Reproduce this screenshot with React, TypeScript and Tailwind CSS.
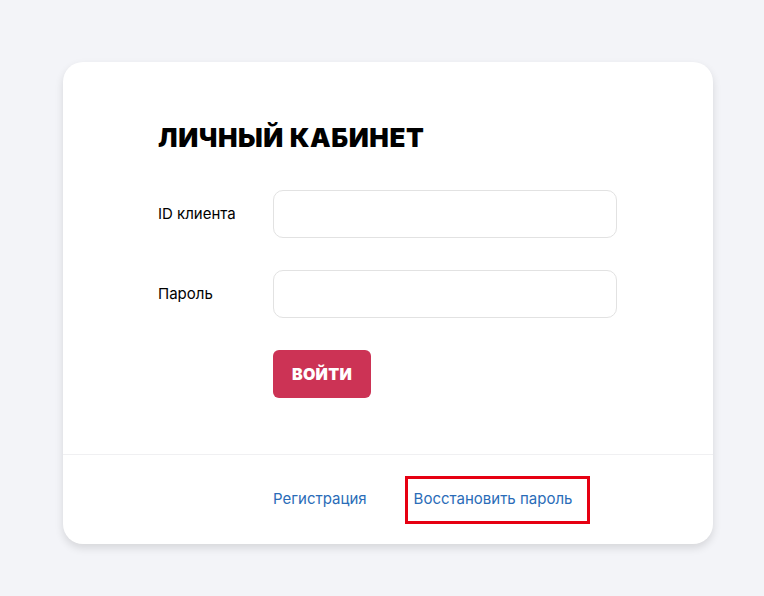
import React from "react"

export default function App() {
  return (
    <div className="min-h-[596px] w-full bg-[#f3f4f8] pt-[62px] font-['Inter','Liberation_Sans',sans-serif]">
      <div className="ml-[63px] w-[650px] rounded-[20px] bg-white shadow-[0_4px_8px_rgba(0,0,0,0.12)]">
        <div className="pl-[95px] pt-[60px] pb-[56px]">
          <h1 className="text-[26px] leading-[32px] font-black tracking-[0.6px] text-black">
            ЛИЧНЫЙ КАБИНЕТ
          </h1>

          <div className="mt-[36px] flex flex-col gap-[32px]">
            <div className="flex items-center">
              <label className="w-[115px] text-[15px] text-black">ID клиента</label>
              <input
                type="text"
                className="h-[48px] w-[344px] rounded-[10px] border border-[#e2e2e2] bg-white px-3 outline-none"
              />
            </div>
            <div className="flex items-center">
              <label className="w-[115px] text-[15px] text-black">Пароль</label>
              <input
                type="password"
                className="h-[48px] w-[344px] rounded-[10px] border border-[#e2e2e2] bg-white px-3 outline-none"
              />
            </div>
            <div className="flex">
              <div className="w-[115px]" />
              <button className="h-[48px] w-[98px] rounded-[6px] bg-[#cc3355] text-[16px] font-black tracking-[0.3px] text-white">
                ВОЙТИ
              </button>
            </div>
          </div>
        </div>

        <div className="border-t border-[#f0f0f2] h-[90px] flex items-center pl-[210px]">
          <a href="#" className="text-[15px] text-[#2a6cb8]">Регистрация</a>
          <a
            href="#"
            className="ml-[38px] flex h-[48px] items-center border-[3px] border-[#e60012] pl-[6px] pr-[15px] text-[15px] text-[#2a6cb8]"
          >
            Восстановить пароль
          </a>
        </div>
      </div>
    </div>
  )
}
